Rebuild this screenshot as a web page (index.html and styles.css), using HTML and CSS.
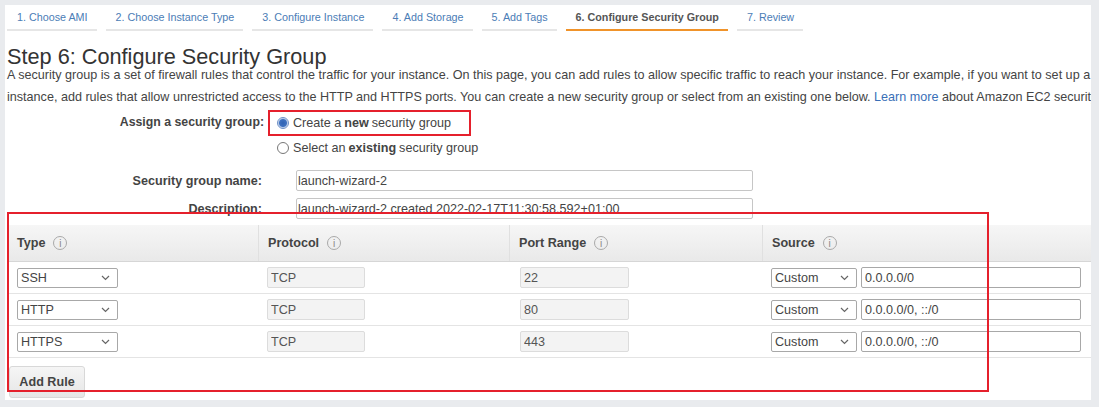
FILE: index.html
```html
<!DOCTYPE html>
<html>
<head>
	<title>Launch Instance - Configure Security Group</title>
	<link rel="stylesheet" href="styles.css">
</head>
<body>
	<div class="page">
		<ul class="tabs">
			<li class="tab">1. Choose AMI</li>
			<li class="tab">2. Choose Instance Type</li>
			<li class="tab">3. Configure Instance</li>
			<li class="tab">4. Add Storage</li>
			<li class="tab">5. Add Tags</li>
			<li class="tab active">6. Configure Security Group</li>
			<li class="tab">7. Review</li>
		</ul>

		<h1 class="title">Step 6: Configure Security Group</h1>
		<p class="intro">
			<span class="line">A security group is a set of firewall rules that control the traffic for your instance. On this page, you can add rules to allow specific traffic to reach your instance. For example, if you want to set up a</span>
			<span class="line">instance, add rules that allow unrestricted access to the HTTP and HTTPS ports. You can create a new security group or select from an existing one below. <a href="#">Learn more</a> about Amazon EC2 security groups.</span>
		</p>

		<div class="form">
			<div class="form-row assign">
				<div class="form-label">Assign a security group:</div>
				<div class="radios">
					<div class="radio marked"><span class="dot checked"></span>Create a <b>new</b> security group</div>
					<div class="radio"><span class="dot"></span>Select an <b>existing</b> security group</div>
				</div>
			</div>
			<div class="form-row field">
				<div class="form-label">Security group name:</div>
				<input class="text-input" type="text" value="launch-wizard-2">
			</div>
			<div class="form-row field desc">
				<div class="form-label">Description:</div>
				<input class="text-input" type="text" value="launch-wizard-2 created 2022-02-17T11:30:58.592+01:00">
			</div>
		</div>

		<div class="rules">
			<div class="rules-row rules-head">
				<div class="cell">Type <span class="info">i</span></div>
				<div class="cell">Protocol <span class="info">i</span></div>
				<div class="cell">Port Range <span class="info">i</span></div>
				<div class="cell">Source <span class="info">i</span></div>
			</div>
			<div class="rules-row">
				<div class="cell"><div class="select type-select"><span>SSH</span><svg width="9" height="6" viewBox="0 0 9 6"><path d="M1 1l3.5 3.5L8 1" fill="none" stroke="#666" stroke-width="1.2"/></svg></div></div>
				<div class="cell"><input class="ro proto" type="text" value="TCP" readonly></div>
				<div class="cell"><input class="ro port" type="text" value="22" readonly></div>
				<div class="cell src"><div class="select src-select"><span>Custom</span><svg width="9" height="6" viewBox="0 0 9 6"><path d="M1 1l3.5 3.5L8 1" fill="none" stroke="#666" stroke-width="1.2"/></svg></div><input class="cidr" type="text" value="0.0.0.0/0"></div>
			</div>
			<div class="rules-row">
				<div class="cell"><div class="select type-select"><span>HTTP</span><svg width="9" height="6" viewBox="0 0 9 6"><path d="M1 1l3.5 3.5L8 1" fill="none" stroke="#666" stroke-width="1.2"/></svg></div></div>
				<div class="cell"><input class="ro proto" type="text" value="TCP" readonly></div>
				<div class="cell"><input class="ro port" type="text" value="80" readonly></div>
				<div class="cell src"><div class="select src-select"><span>Custom</span><svg width="9" height="6" viewBox="0 0 9 6"><path d="M1 1l3.5 3.5L8 1" fill="none" stroke="#666" stroke-width="1.2"/></svg></div><input class="cidr" type="text" value="0.0.0.0/0, ::/0"></div>
			</div>
			<div class="rules-row">
				<div class="cell"><div class="select type-select"><span>HTTPS</span><svg width="9" height="6" viewBox="0 0 9 6"><path d="M1 1l3.5 3.5L8 1" fill="none" stroke="#666" stroke-width="1.2"/></svg></div></div>
				<div class="cell"><input class="ro proto" type="text" value="TCP" readonly></div>
				<div class="cell"><input class="ro port" type="text" value="443" readonly></div>
				<div class="cell src"><div class="select src-select"><span>Custom</span><svg width="9" height="6" viewBox="0 0 9 6"><path d="M1 1l3.5 3.5L8 1" fill="none" stroke="#666" stroke-width="1.2"/></svg></div><input class="cidr" type="text" value="0.0.0.0/0, ::/0"></div>
			</div>
			<button class="add-rule">Add Rule</button>
		</div>

		<!-- highlight drawn over the rules table -->
		<div class="mark-box"></div>
	</div>
</body>
</html>
```

FILE: styles.css
```css
* {
	margin: 0;
	padding: 0;
	box-sizing: border-box;
}

body {
	background-color: #e9ebee;
	padding: 5px 0 0 5px;
	font-family: "Liberation Sans", Arial, sans-serif;
	font-size: 12.6px;
	color: #444;
}

.page {
	position: relative;
	width: 1086px;
	height: 395px;
	background-color: #fff;
	overflow: hidden;
}

/* wizard steps */
.tabs {
	display: flex;
	gap: 9px;
	list-style: none;
	padding-left: 2px;
}

.tab {
	height: 26px;
	padding: 6px 9px 0 10px;
	border-bottom: 2px solid #e6e6e6;
	font-size: 10.75px;
	color: #4b7db6;
	white-space: nowrap;
}

.tab.active {
	color: #555;
	font-weight: bold;
	border-bottom-color: #f0932a;
}

.title {
	margin-top: 18px;
	padding-left: 2px;
	font-size: 21.7px;
	font-weight: normal;
	line-height: 16px;
	color: #333;
}

.intro {
	margin-top: -1px;
	padding-left: 2px;
	line-height: 22px;
	white-space: nowrap;
}

.intro .line {
	display: block;
}

.intro a {
	color: #3a6fb7;
	text-decoration: none;
}

/* form */
.form-row {
	display: flex;
}

.form-label {
	width: 259px;
	text-align: right;
	font-weight: bold;
	white-space: nowrap;
}

.assign {
	margin-top: 2px;
	align-items: flex-start;
}

.assign .form-label {
	line-height: 24px;
	font-size: 12.3px;
}

.radios {
	margin-left: 4px;
}

.radio {
	display: flex;
	align-items: center;
	height: 22px;
	padding-left: 9px;
	white-space: nowrap;
}

.radio b {
	margin: 0 3px;
}

.radio.marked {
	height: 26px;
	width: 203px;
	padding-left: 7px;
	border: 2px solid #e5202c;
	margin-bottom: 1px;
}

.dot {
	width: 12px;
	height: 12px;
	border: 1px solid #777;
	border-radius: 50%;
	margin-right: 4px;
	background-color: #fff;
}

.dot.checked {
	border-color: #6d8fc6;
	background: radial-gradient(circle, #2f62b3 0, #3d70c0 3.5px, #b9cbe8 4.5px, #fff 5.5px);
}

.field {
	align-items: center;
	margin-top: 11px;
}

.field .form-label {
	width: 257px;
}

.field.desc {
	margin-top: 7px;
}

.text-input {
	margin-left: 34px;
	width: 457px;
	height: 21px;
	padding: 0 1px;
	border: 1px solid #c6c6c6;
	border-radius: 2px;
	font-family: "Liberation Sans", Arial, sans-serif;
	font-size: 12.6px;
	color: #444;
	outline: none;
}

/* rules table */
.rules {
	margin: 6px 0 0 3px;
}

.rules-row {
	display: grid;
	grid-template-columns: 250px 251px 253px 1fr;
	height: 32px;
	align-items: center;
	border-bottom: 1px solid #e4e4e4;
}

.rules-head {
	height: 37px;
	background: linear-gradient(#f6f6f6, #e9e9e9);
	border-bottom: 1px solid #d6d6d6;
	font-weight: bold;
}

.rules-head .cell {
	display: flex;
	align-items: center;
	height: 100%;
	border-left: 1px solid #e0e0e0;
}

.rules-head .cell:first-child {
	border-left: none;
}

.cell {
	padding-left: 9px;
	display: flex;
	align-items: center;
}

.info {
	display: inline-flex;
	align-items: center;
	justify-content: center;
	width: 14px;
	height: 14px;
	margin-left: 8px;
	border: 1px solid #a9a9a9;
	border-radius: 50%;
	font-size: 10px;
	font-weight: normal;
	color: #888;
}

.select {
	display: flex;
	align-items: center;
	justify-content: space-between;
	height: 20px;
	padding: 0 7px 0 3px;
	border: 1px solid #a8a8a8;
	border-radius: 2px;
	background-color: #fff;
}

.type-select {
	width: 101px;
}

.src-select {
	width: 86px;
}

.ro,
.cidr {
	height: 21px;
	padding: 0 3px;
	border: 1px solid #dcdcdc;
	border-radius: 2px;
	font-family: "Liberation Sans", Arial, sans-serif;
	font-size: 12.6px;
	color: #555;
	outline: none;
}

.ro {
	background-color: #f3f3f3;
}

.proto {
	width: 98px;
}

.port {
	margin-left: 2px;
	width: 109px;
}

.cidr {
	margin-left: 4px;
	width: 220px;
	border-color: #a8a8a8;
	color: #444;
}

.add-rule {
	margin: 8px 0 0 1px;
	width: 76px;
	height: 32px;
	border: 1px solid #d8d8d8;
	border-radius: 3px;
	background: linear-gradient(#f5f5f5, #e6e6e6);
	font-family: "Liberation Sans", Arial, sans-serif;
	font-size: 12.6px;
	font-weight: bold;
	color: #444;
}

.mark-box {
	position: absolute;
	left: 2px;
	top: 207px;
	width: 982px;
	height: 180px;
	border: 2px solid #e5202c;
	pointer-events: none;
}
```
